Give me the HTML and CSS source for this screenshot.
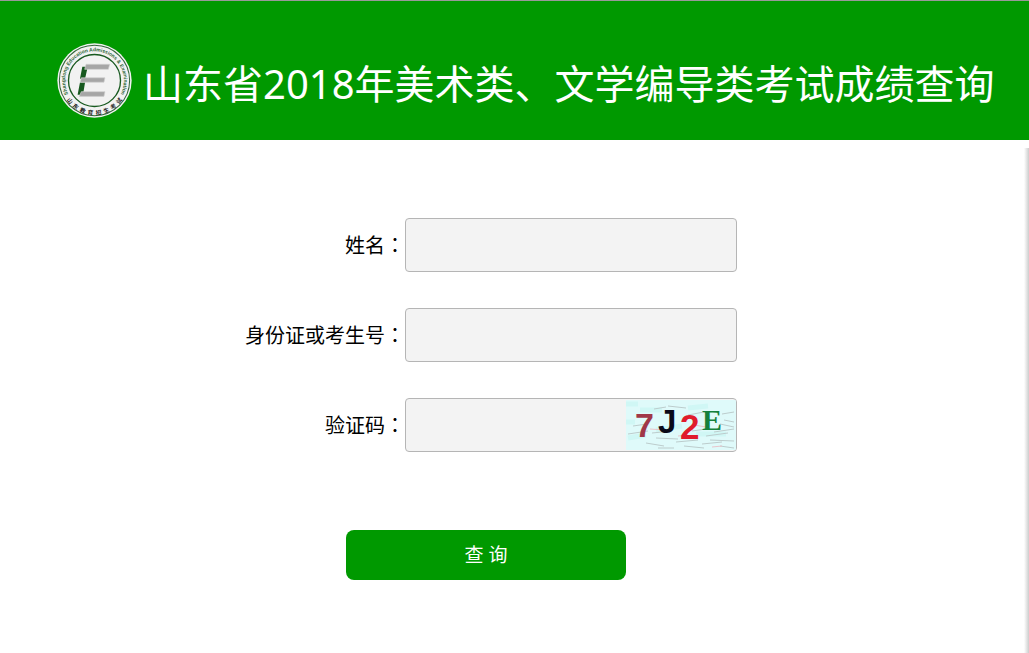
FILE: index.html
```html
<!DOCTYPE html>
<html lang="zh-CN">
<head>
    <title>山东省2018年美术类、文学编导类考试成绩查询</title>
    <meta charset="UTF-8">
    <meta name="viewport" content="width=device-width, initial-scale=1.0">
    <link rel="stylesheet" href="styles.css">
</head>
<body>
    <div class="header">
        <svg class="logo" viewBox="0 0 222 222" aria-hidden="true">
            <defs>
                <path id="arcTop" d="M 33 150 A 87 87 0 1 1 189 150"/>
                <path id="arcBottom" d="M 13 128 A 99 99 0 0 0 209 128"/>
            </defs>
            <circle cx="111" cy="111" r="110" fill="#f2f2f2"/>
            <circle cx="111" cy="111" r="104" fill="none" stroke="#33663a" stroke-width="3"/>
            <circle cx="111" cy="111" r="77" fill="none" stroke="#17591f" stroke-width="4"/>
            <text class="logo-en"><textPath href="#arcTop" startOffset="50%" text-anchor="middle">Shangdong Education Admissions &amp; Examination</textPath></text>
            <text class="logo-cn"><textPath href="#arcBottom" startOffset="50%" text-anchor="middle">山&ensp;东&ensp;教&ensp;育&ensp;招&ensp;生&ensp;考&ensp;试</textPath></text>
            <path d="M75 70h16l-8 36H68z M68 117h15l-6 36H61z" fill="#17591f"/>
            <path d="M86 63h70l-4 15H82z M72 103h70l-3 13H69z M72 144h70l-3 14H66z" fill="#a6a6a6" stroke="#cfcfcf" stroke-width="2"/>
        </svg>
        <h1>山东省2018年美术类、文学编导类考试成绩查询</h1>
    </div>

    <div class="content">
        <form class="query-form">
            <div class="form-row">
                <label for="name">姓名<span class="colon" lang="zh-TW">：</span></label>
                <div class="field"><input type="text" id="name"></div>
            </div>
            <div class="form-row">
                <label for="number">身份证或考生号<span class="colon" lang="zh-TW">：</span></label>
                <div class="field"><input type="text" id="number"></div>
            </div>
            <div class="form-row">
                <label for="code">验证码<span class="colon" lang="zh-TW">：</span></label>
                <div class="field">
                    <input type="text" id="code">
                    <svg class="captcha" viewBox="0 0 110 50">
                        <rect width="110" height="50" fill="#dffafa"/>
                        <path d="M0 4h12M0 22h9M14 10h22M30 30l26-4M62 8l20-2M70 34h30M2 38l18-3" stroke="#d0f7f5" stroke-width="5"/>
                        <path d="M28 9l12-2M42 6l18 2M7 26l14-2M2 34l20-3M26 33l20-2M30 38l22 1M50 42l22-2M20 43l18 3M32 48h16M58 46l20 2M80 36l22-3M84 40l24 1M76 44l20-2M94 46l14 2M88 32l20-3M94 24l14 3M96 14l12-2M66 31l14-2M62 15l16-3M98 20l10 2" fill="none" stroke="#bccccc" stroke-width="1"/>
                        <path d="M24 29l14 1M52 36l10-1M68 25l12 2M86 47l10-1" stroke="#e8c4ca" stroke-width="1"/>
                        <text class="code-7" x="9" y="37">7</text>
                        <text class="code-j" x="32" y="33">J</text>
                        <text class="code-2" x="54" y="39">2</text>
                        <text class="code-e" x="76" y="30">E</text>
                    </svg>
                </div>
            </div>
            <button type="button" class="query-btn">查 询</button>
        </form>
        <div class="edge"></div>
    </div>
</body>
</html>
```
FILE: styles.css
```css
* { margin: 0; padding: 0; box-sizing: border-box; }
body { min-height: 100vh; display: flex; flex-direction: column; background: white; color: #000; font-family: "Noto Sans", "Noto Sans CJK SC", sans-serif; font-size: 20px; }

.header { display: flex; align-items: center; gap: 11px; height: 140px; padding: 20px 0 0 57px; background: #009900; border-top: 1px solid #999; }
.header h1 { padding-top: 6px; color: white; font-size: 40px; font-weight: 400; line-height: 60px; white-space: nowrap; }
.logo { flex: none; width: 75px; height: 75px; }
.logo-en { font-family: "Liberation Sans", sans-serif; font-size: 15px; font-weight: bold; fill: #2c6534; }
.logo-cn { font-family: "Noto Sans CJK SC", sans-serif; font-size: 17px; font-weight: bold; fill: #222; }

.content { flex: 1; display: flex; }
.query-form { flex: 1; display: flex; flex-direction: column; align-items: center; padding: 78px 52px 40px 0; }
.form-row { display: flex; align-items: center; width: 502px; max-width: 100%; margin-bottom: 36px; }
.form-row label { width: 170px; text-align: right; line-height: 30px; white-space: nowrap; }
.colon { font-family: "Noto Sans CJK TC", sans-serif; }
.field { flex: 1; display: flex; height: 54px; background: #f3f3f3; border: 1px solid #b5b5b5; border-radius: 4px; overflow: hidden; }
.field input { flex: 1; min-width: 0; padding: 0 10px; border: none; outline: none; background: transparent; font: inherit; }

.captcha { flex: none; width: 110px; height: 50px; margin-top: 1px; }
.code-7, .code-j, .code-2 { font-family: "Liberation Sans", sans-serif; font-weight: bold; }
.code-7 { font-size: 34px; fill: #a03848; }
.code-j { font-size: 33px; fill: #0a0a18; }
.code-2 { font-size: 35px; fill: #e01c2c; }
.code-e { font-family: "Liberation Serif", serif; font-size: 30px; font-weight: bold; fill: #14803c; }

.query-btn { width: 280px; height: 50px; padding-bottom: 2px; margin-top: 42px; background: #009900; color: white; border: none; border-radius: 8px; font-family: inherit; font-size: 19px; cursor: pointer; }
.query-btn:hover { background: #008800; }

.edge { width: 5px; margin-top: 8px; background: linear-gradient(to right, #fff, #ccc); }
```
